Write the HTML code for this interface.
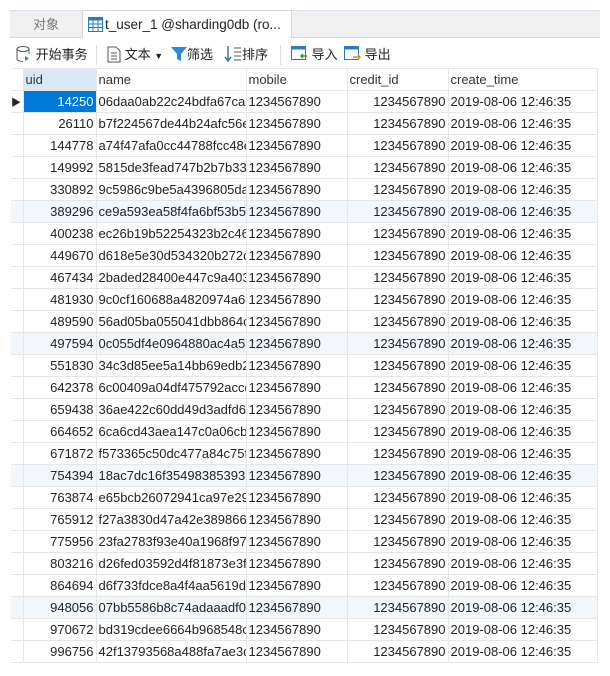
<!DOCTYPE html>
<html><head><meta charset="utf-8"><style>
*{margin:0;padding:0;box-sizing:border-box}
body{width:610px;height:676px;background:#fff;font-family:"Liberation Sans","Noto Sans CJK SC",sans-serif;font-size:13px;color:#222;position:relative;overflow:hidden}
.tabbar{position:absolute;left:10px;top:10px;width:590px;height:28px;background:#f0f0f0;border-top:1px solid #dde;border-bottom:1px solid #d8d8d8}
.tab1{position:absolute;left:0;top:0;width:72px;height:27px;line-height:27px;text-align:center;color:#777}
.tab2{position:absolute;left:72px;top:-1px;width:210px;height:28px;background:#fff;border:1px solid #d8d8d8;border-bottom:none;line-height:27px;padding-left:22px;font-size:13.5px}
.tb{position:absolute;top:43px;height:24px;line-height:24px;font-size:13px}
table{position:absolute;left:11px;top:68px;width:586px;border-collapse:collapse;table-layout:fixed}
td{height:22px;border:1px solid #e6e6e6;padding:0 2px;white-space:nowrap;overflow:hidden;font-size:13px}
tr.h td{background:#fff;color:#333}
td.ind{border-left:none;padding:0}
td.r{text-align:right}
tr.t td{background:#f2f7fc}
</style></head><body>
<div class="tabbar">
<div class="tab1">对象</div>
<div class="tab2"><svg style="position:absolute;left:5px;top:6px" width="15" height="15"><rect x="0.5" y="0.5" width="14" height="14" fill="#fff" stroke="#2a7bc6"/><rect x="0.5" y="0.5" width="14" height="3" fill="#2a7bc6"/><path d="M5 1v13M10 1v13M1 7h13M1 10.5h13" stroke="#2a7bc6"/></svg>t_user_1 @sharding0db (ro...</div>
</div>
<div class="tb" style="left:16px"><svg width="16" height="18" style="vertical-align:-4px"><ellipse cx="7" cy="4" rx="6" ry="2.5" fill="none" stroke="#555"/><path d="M1 4v10c0 1.5 3 2.5 6 2.5M13 4v5" fill="none" stroke="#555"/><path d="M9 11l4 2.5-4 2.5z" fill="#3a9a3a"/></svg> 开始事务</div>
<div style="position:absolute;left:96px;top:45px;width:1px;height:20px;background:#ddd"></div>
<div class="tb" style="left:107px"><svg width="14" height="17" style="vertical-align:-4px"><path d="M1 1h8l4 4v11H1z" fill="#fff" stroke="#555"/><path d="M4 7h6M4 10h6M4 13h6" stroke="#555"/></svg> 文本 <span style="font-size:9px">▼</span></div>
<div class="tb" style="left:171px"><svg width="16" height="16" style="vertical-align:-3px"><path d="M0 1h16l-6 7v7l-4-2v-5z" fill="#2a8ad8"/></svg>筛选</div>
<div class="tb" style="left:224px"><svg width="18" height="18" style="vertical-align:-4px"><path d="M4 1v15M1 12l3 4 3-4" fill="none" stroke="#2a7bc6" stroke-width="1.5"/><path d="M10 3h7M10 7h7M10 11h7M10 15h7" stroke="#555"/></svg>排序</div>
<div style="position:absolute;left:280px;top:45px;width:1px;height:20px;background:#ddd"></div>
<div class="tb" style="left:291px"><svg width="17" height="16" style="vertical-align:-3px"><rect x="0.5" y="0.5" width="14" height="13" fill="#fff" stroke="#2a7bc6"/><rect x="0.5" y="0.5" width="14" height="3" fill="#2a7bc6"/><path d="M16 10h-6M12 8l-2 2 2 2" stroke="#3a9a3a" stroke-width="1.5" fill="none"/></svg> 导入</div>
<div class="tb" style="left:344px"><svg width="17" height="16" style="vertical-align:-3px"><rect x="0.5" y="0.5" width="14" height="13" fill="#fff" stroke="#2a7bc6"/><rect x="0.5" y="0.5" width="14" height="3" fill="#2a7bc6"/><path d="M9 11h7M14 9l2 2-2 2" stroke="#e08a1a" stroke-width="1.5" fill="none"/></svg> 导出</div>
<table>
<colgroup><col style="width:12px"><col style="width:73px"><col style="width:150px"><col style="width:101px"><col style="width:101px"><col style="width:149px"></colgroup>
<tr class="h"><td class="ind"></td><td style="background:#d9e8f7">uid</td><td>name</td><td>mobile</td><td>credit_id</td><td>create_time</td></tr>
<tr><td class="ind" style="font-size:10px">▶</td><td class="r" style="background:#0078d7;color:#fff">14250</td><td>06daa0ab22c24bdfa67ca7</td><td>1234567890</td><td class="r">1234567890</td><td>2019-08-06 12:46:35</td></tr>
<tr><td class="ind"></td><td class="r">26110</td><td>b7f224567de44b24afc56e</td><td>1234567890</td><td class="r">1234567890</td><td>2019-08-06 12:46:35</td></tr>
<tr><td class="ind"></td><td class="r">144778</td><td>a74f47afa0cc44788fcc48e</td><td>1234567890</td><td class="r">1234567890</td><td>2019-08-06 12:46:35</td></tr>
<tr><td class="ind"></td><td class="r">149992</td><td>5815de3fead747b2b7b33</td><td>1234567890</td><td class="r">1234567890</td><td>2019-08-06 12:46:35</td></tr>
<tr><td class="ind"></td><td class="r">330892</td><td>9c5986c9be5a4396805da1</td><td>1234567890</td><td class="r">1234567890</td><td>2019-08-06 12:46:35</td></tr>
<tr class="t"><td class="ind"></td><td class="r">389296</td><td>ce9a593ea58f4fa6bf53b57</td><td>1234567890</td><td class="r">1234567890</td><td>2019-08-06 12:46:35</td></tr>
<tr><td class="ind"></td><td class="r">400238</td><td>ec26b19b52254323b2c46</td><td>1234567890</td><td class="r">1234567890</td><td>2019-08-06 12:46:35</td></tr>
<tr><td class="ind"></td><td class="r">449670</td><td>d618e5e30d534320b272c</td><td>1234567890</td><td class="r">1234567890</td><td>2019-08-06 12:46:35</td></tr>
<tr><td class="ind"></td><td class="r">467434</td><td>2baded28400e447c9a403</td><td>1234567890</td><td class="r">1234567890</td><td>2019-08-06 12:46:35</td></tr>
<tr><td class="ind"></td><td class="r">481930</td><td>9c0cf160688a4820974a6c</td><td>1234567890</td><td class="r">1234567890</td><td>2019-08-06 12:46:35</td></tr>
<tr><td class="ind"></td><td class="r">489590</td><td>56ad05ba055041dbb864c</td><td>1234567890</td><td class="r">1234567890</td><td>2019-08-06 12:46:35</td></tr>
<tr class="t"><td class="ind"></td><td class="r">497594</td><td>0c055df4e0964880ac4a5a</td><td>1234567890</td><td class="r">1234567890</td><td>2019-08-06 12:46:35</td></tr>
<tr><td class="ind"></td><td class="r">551830</td><td>34c3d85ee5a14bb69edb2</td><td>1234567890</td><td class="r">1234567890</td><td>2019-08-06 12:46:35</td></tr>
<tr><td class="ind"></td><td class="r">642378</td><td>6c00409a04df475792accd</td><td>1234567890</td><td class="r">1234567890</td><td>2019-08-06 12:46:35</td></tr>
<tr><td class="ind"></td><td class="r">659438</td><td>36ae422c60dd49d3adfd6</td><td>1234567890</td><td class="r">1234567890</td><td>2019-08-06 12:46:35</td></tr>
<tr><td class="ind"></td><td class="r">664652</td><td>6ca6cd43aea147c0a06cbc</td><td>1234567890</td><td class="r">1234567890</td><td>2019-08-06 12:46:35</td></tr>
<tr><td class="ind"></td><td class="r">671872</td><td>f573365c50dc477a84c75f</td><td>1234567890</td><td class="r">1234567890</td><td>2019-08-06 12:46:35</td></tr>
<tr class="t"><td class="ind"></td><td class="r">754394</td><td>18ac7dc16f354983853933</td><td>1234567890</td><td class="r">1234567890</td><td>2019-08-06 12:46:35</td></tr>
<tr><td class="ind"></td><td class="r">763874</td><td>e65bcb26072941ca97e29</td><td>1234567890</td><td class="r">1234567890</td><td>2019-08-06 12:46:35</td></tr>
<tr><td class="ind"></td><td class="r">765912</td><td>f27a3830d47a42e389866</td><td>1234567890</td><td class="r">1234567890</td><td>2019-08-06 12:46:35</td></tr>
<tr><td class="ind"></td><td class="r">775956</td><td>23fa2783f93e40a1968f97</td><td>1234567890</td><td class="r">1234567890</td><td>2019-08-06 12:46:35</td></tr>
<tr><td class="ind"></td><td class="r">803216</td><td>d26fed03592d4f81873e3f</td><td>1234567890</td><td class="r">1234567890</td><td>2019-08-06 12:46:35</td></tr>
<tr><td class="ind"></td><td class="r">864694</td><td>d6f733fdce8a4f4aa5619d</td><td>1234567890</td><td class="r">1234567890</td><td>2019-08-06 12:46:35</td></tr>
<tr class="t"><td class="ind"></td><td class="r">948056</td><td>07bb5586b8c74adaaadf0</td><td>1234567890</td><td class="r">1234567890</td><td>2019-08-06 12:46:35</td></tr>
<tr><td class="ind"></td><td class="r">970672</td><td>bd319cdee6664b968548c</td><td>1234567890</td><td class="r">1234567890</td><td>2019-08-06 12:46:35</td></tr>
<tr><td class="ind"></td><td class="r">996756</td><td>42f13793568a488fa7ae3d</td><td>1234567890</td><td class="r">1234567890</td><td>2019-08-06 12:46:35</td></tr>
</table>
</body></html>
